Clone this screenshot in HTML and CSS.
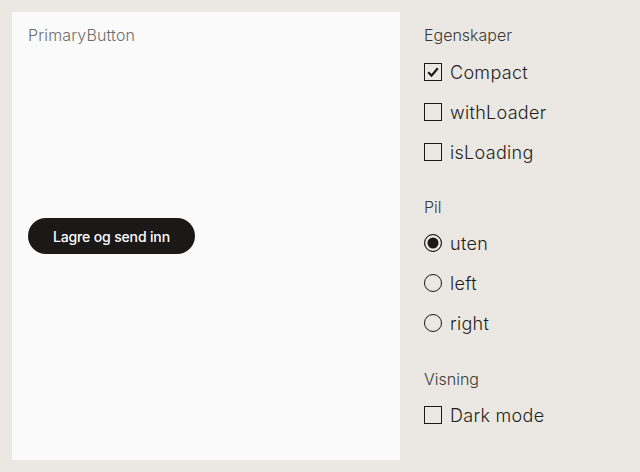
FILE: index.html
```html
<!DOCTYPE html>
<html lang="no">
<head>
<meta charset="utf-8">
<link rel="stylesheet" href="styles.css">
</head>
<body>
<div class="app">
  <section class="preview">
    <div class="preview-title">PrimaryButton</div>
    <div class="preview-stage">
      <button class="btn-primary">Lagre og send inn</button>
    </div>
  </section>
  <aside class="controls">
    <div class="group group-first">
      <div class="group-title">Egenskaper</div>
      <label class="row"><span class="box checked"><svg viewBox="0 0 18 18" width="18" height="18"><path d="M4.2 9.3 L7.5 12.6 L13.8 5.2" fill="none" stroke="#1a1917" stroke-width="2.2"/></svg></span><span class="row-text">Compact</span></label>
      <label class="row"><span class="box"></span><span class="row-text">withLoader</span></label>
      <label class="row"><span class="box"></span><span class="row-text">isLoading</span></label>
    </div>
    <div class="group">
      <div class="group-title">Pil</div>
      <label class="row"><span class="radio checked"></span><span class="row-text">uten</span></label>
      <label class="row"><span class="radio"></span><span class="row-text">left</span></label>
      <label class="row"><span class="radio"></span><span class="row-text">right</span></label>
    </div>
    <div class="group">
      <div class="group-title">Visning</div>
      <label class="row"><span class="box"></span><span class="row-text">Dark mode</span></label>
    </div>
  </aside>
</div>
</body>
</html>
```
FILE: styles.css
```css
* { box-sizing: border-box; }
html, body { margin: 0; padding: 0; }
body {
  background: #ebe8e3;
  font-family: Inter, "Noto Sans", sans-serif;
  color: #1f1e1c;
  width: 640px;
  height: 472px;
  overflow: hidden;
}
.app {
  display: flex;
  padding: 12px;
  height: 472px;
}
.preview {
  width: 388px;
  height: 448px;
  background: #fafafa;
  display: grid;
  grid-template-rows: 1fr auto 1fr;
  padding: 0 16px;
}
.preview-title {
  grid-row: 1;
  align-self: start;
  padding-top: 13px;
  font-size: 16px;
  line-height: 20px;
  color: #6e6d6a;
  font-weight: 300;
  letter-spacing: 0.15px;
}
.preview-stage {
  grid-row: 2;
  display: flex;
}
.btn-primary {
  height: 36px;
  padding: 0 25px;
  border: none;
  border-radius: 18px;
  background: #1a1917;
  color: #ffffff;
  font-family: Inter, "Noto Sans", sans-serif;
  font-size: 14px;
  font-weight: 500;
  letter-spacing: -0.15px;
}
.controls {
  margin-left: 24px;
  padding-top: 11px;
  display: flex;
  flex-direction: column;
  gap: 24px;
}
.group-title {
  font-size: 16px;
  line-height: 24px;
  color: #3b3a37;
  font-weight: 300;
  margin-bottom: 4px;
}
.group-first { margin-bottom: -1px; }
.group-first .group-title { margin-bottom: 5px; }
.row {
  display: flex;
  align-items: center;
  gap: 8px;
  height: 40px;
}
.row-text {
  font-size: 18px;
  font-weight: 300;
  letter-spacing: 0.3px;
  color: #1f1e1c;
}
.box {
  width: 18px;
  height: 18px;
  border: 1.5px solid #1a1917;
  display: flex;
  align-items: center;
  justify-content: center;
  background: transparent;
}
.box svg { display: block; margin: -1.5px; }
.radio {
  width: 18px;
  height: 18px;
  border: 1.5px solid #1a1917;
  border-radius: 50%;
}
.radio.checked {
  background: #1a1917;
  box-shadow: inset 0 0 0 2.5px #ebe8e3;
}
```
